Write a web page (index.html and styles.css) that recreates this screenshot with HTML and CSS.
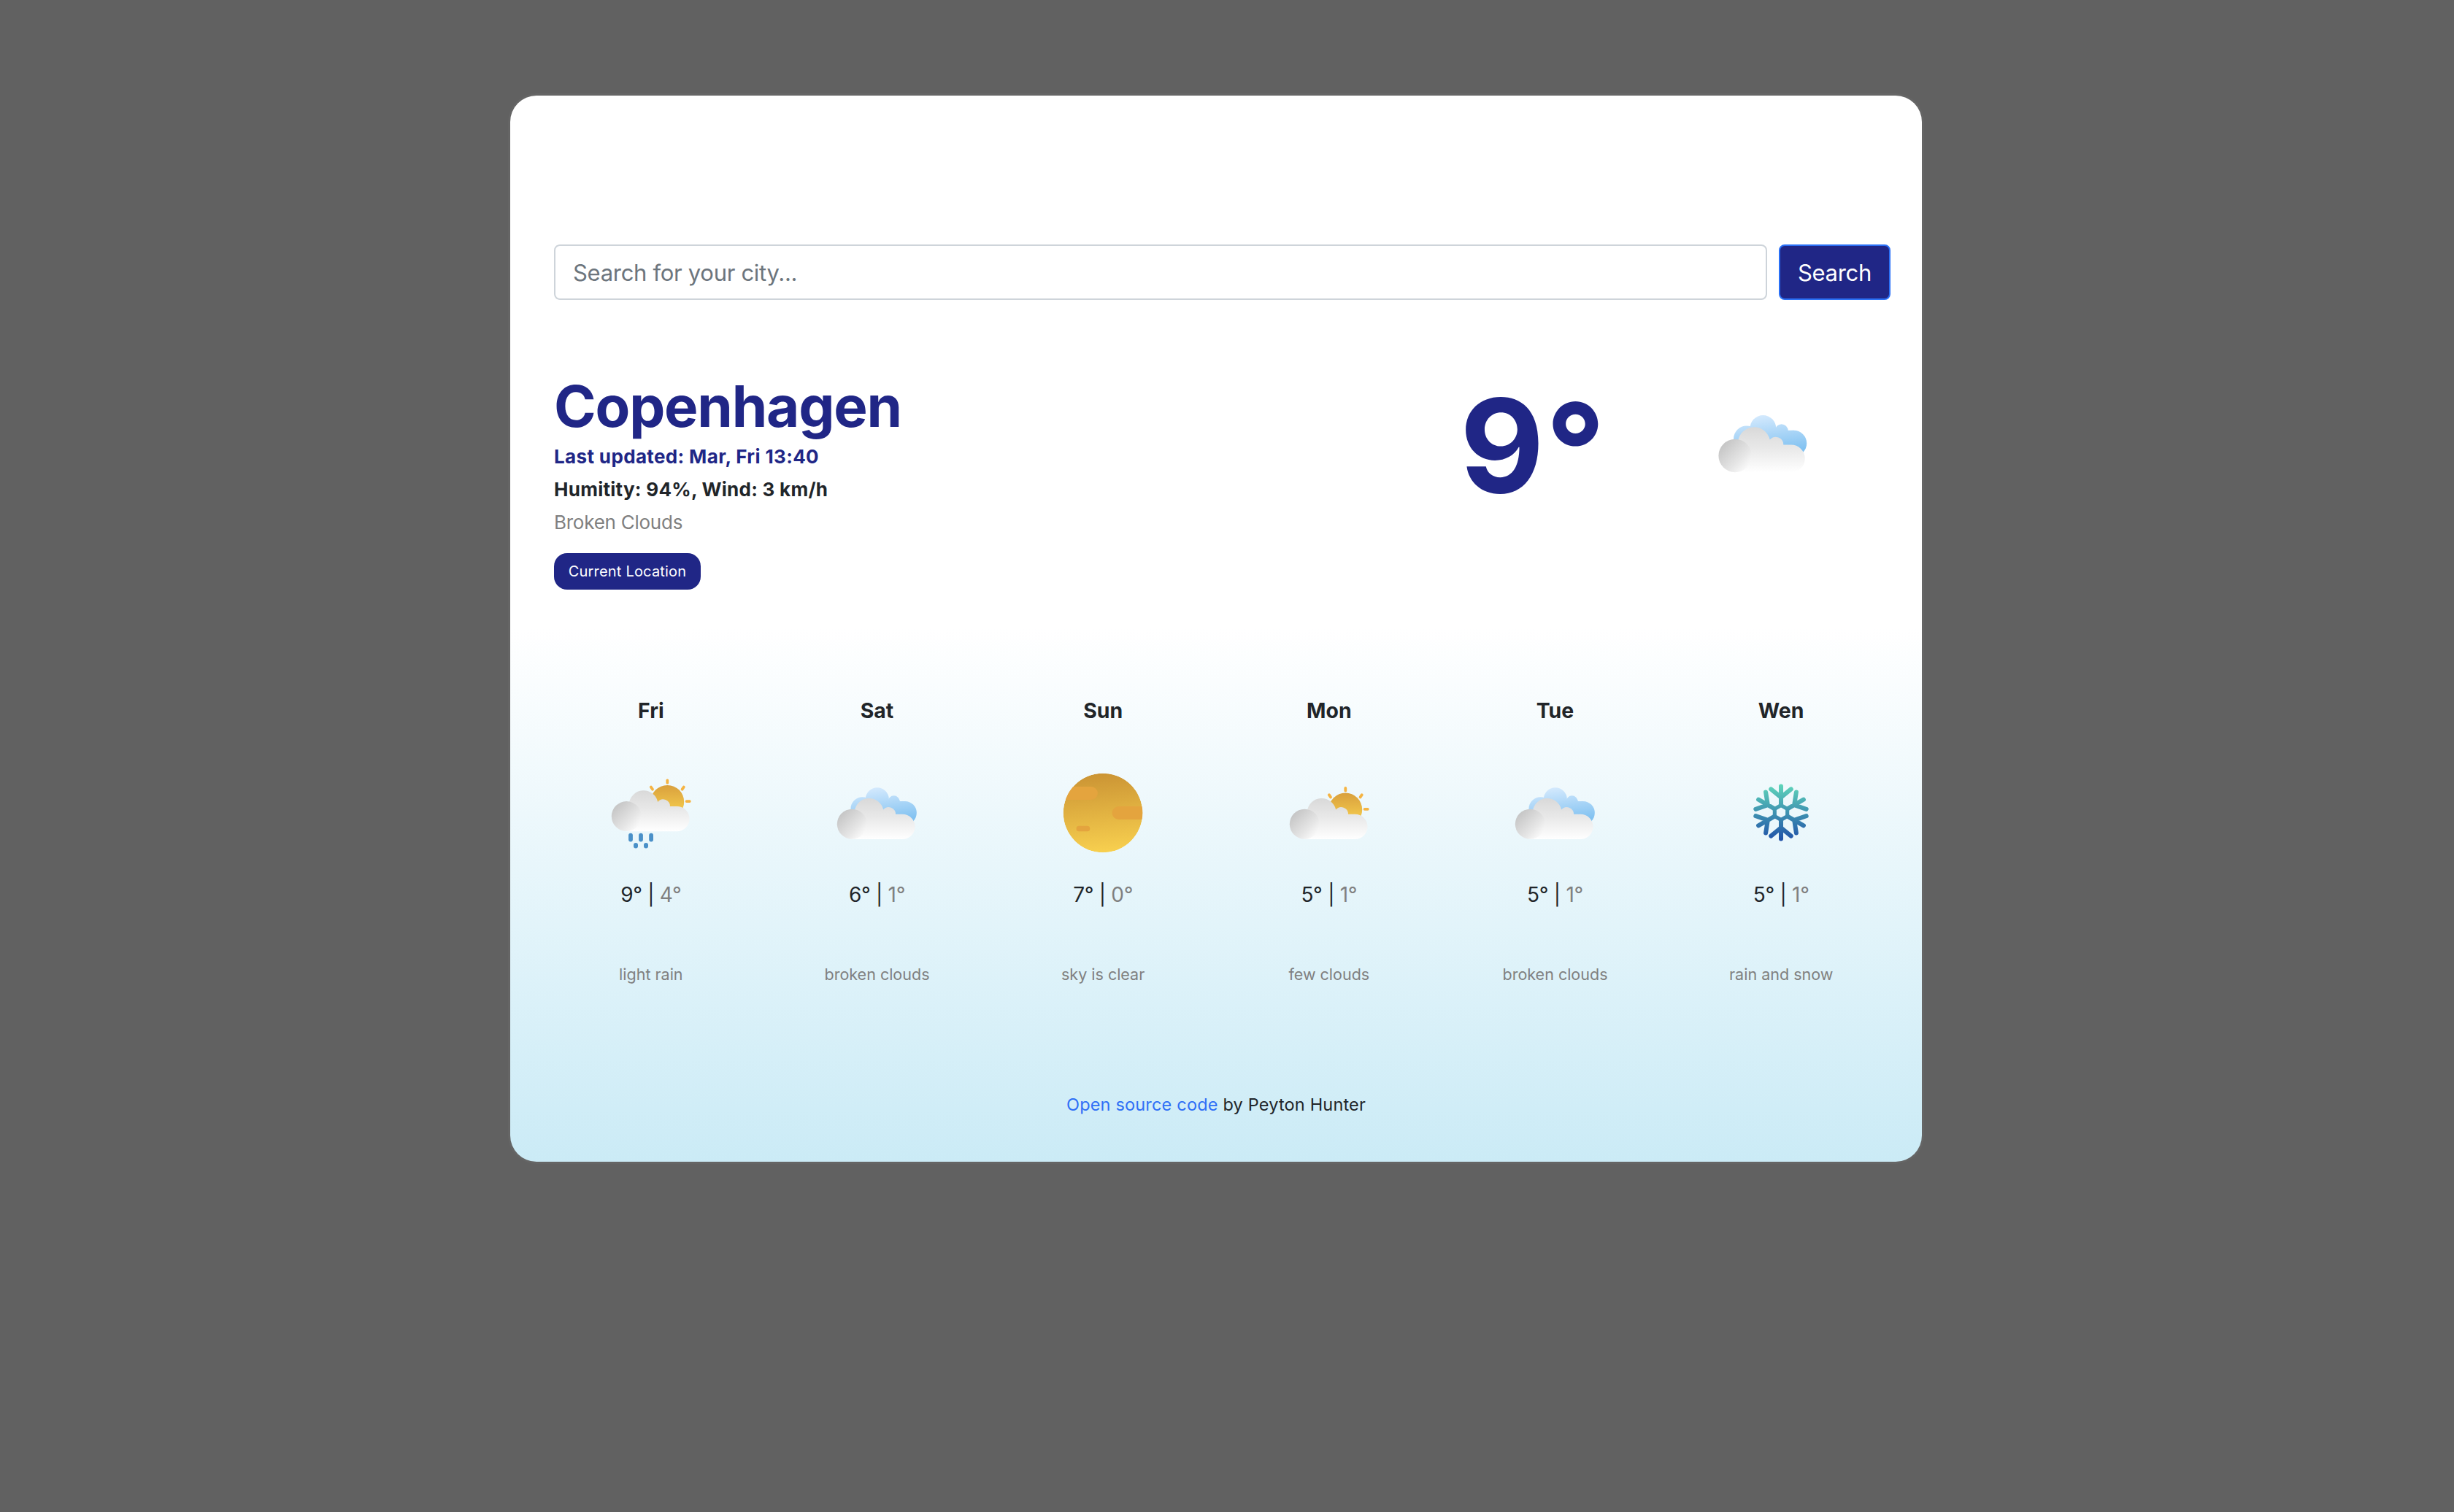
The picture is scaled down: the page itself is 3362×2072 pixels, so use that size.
FILE: index.html
```html
<!DOCTYPE html>
<html lang="en">
<head>
<meta charset="utf-8">
<title>Weather</title>
<link rel="stylesheet" href="styles.css">
</head>
<body>
<svg class="defs" width="0" height="0" aria-hidden="true">
  <defs>
    <linearGradient id="g-cloud" x1="0" y1="0" x2="0" y2="1"><stop offset="0" stop-color="#d9d9d9"/><stop offset=".45" stop-color="#e8e8e8"/><stop offset="1" stop-color="#fff"/></linearGradient>
    <linearGradient id="g-puff" x1=".12" y1=".12" x2=".85" y2=".85"><stop offset="0" stop-color="#c4c4c4"/><stop offset=".7" stop-color="#e6e6e6"/><stop offset="1" stop-color="#f8f8f8"/></linearGradient>
    <linearGradient id="g-blue" gradientUnits="userSpaceOnUse" x1="64" y1="25" x2="70" y2="72"><stop offset="0" stop-color="#d3e9fd"/><stop offset="1" stop-color="#82c2f1"/></linearGradient>
    <linearGradient id="g-sun" x1="0" y1="0" x2="0" y2="1"><stop offset="0" stop-color="#d9a03d"/><stop offset="1" stop-color="#fbd651"/></linearGradient>
    <linearGradient id="g-disc" x1=".45" y1="0" x2=".55" y2="1"><stop offset="0" stop-color="#cb9434"/><stop offset="1" stop-color="#f8d04f"/></linearGradient>
    <linearGradient id="g-snow" gradientUnits="userSpaceOnUse" x1="0" y1="-38" x2="0" y2="38"><stop offset="0" stop-color="#5fd6ba"/><stop offset="1" stop-color="#2050a8"/></linearGradient>
    <clipPath id="c-disc"><circle cx="60" cy="60" r="54.3"/></clipPath>
    <g id="cloud">
      <path fill="url(#g-cloud)" d="M26 96A20.5 20.5 0 0 1 29.8 58A20 20 0 0 1 69.2 55.6A9.5 9.5 0 0 1 86 61.7H95.4A17.1 17.1 0 0 1 95.4 96Z"/>
      <circle cx="26.3" cy="75.3" r="20.5" fill="url(#g-puff)"/>
    </g>
    <g id="sun">
      <circle cx="82.3" cy="55.5" r="22.9" fill="url(#g-sun)"/>
      <path class="rays" d="M82.3 26V29.4M59.8 35.2L62 38.4M104.8 35.2L102.6 38.4M108.6 54.8H112.8"/>
    </g>
    <symbol id="i-clouds" viewBox="0 0 120 120">
      <g fill="url(#g-blue)"><circle cx="40.5" cy="54.4" r="16.1"/><circle cx="60.8" cy="41.4" r="16.1"/><circle cx="83.6" cy="44.3" r="8"/><circle cx="98.7" cy="60" r="16.1"/><path d="M60 42H91.4V43.9H99V75H60Z"/></g>
      <use href="#cloud"/>
    </symbol>
    <symbol id="i-few" viewBox="0 0 120 120"><use href="#sun"/><use href="#cloud"/></symbol>
    <symbol id="i-rain" viewBox="0 0 120 120">
      <g transform="translate(0 -10.7)"><use href="#sun"/><use href="#cloud"/></g>
      <g fill="#4a90c8"><rect x="29.1" y="87.7" width="5.8" height="11.8" rx="2.9"/><rect x="43.1" y="87.7" width="5.8" height="11.8" rx="2.9"/><rect x="57.2" y="87.7" width="5.8" height="11.8" rx="2.9"/><rect x="36" y="101" width="6" height="7.6" rx="3"/><rect x="50" y="101" width="6" height="7.6" rx="3"/></g>
    </symbol>
    <symbol id="i-clear" viewBox="0 0 120 120">
      <g clip-path="url(#c-disc)"><circle cx="60" cy="60" r="54.3" fill="url(#g-disc)"/>
      <g fill="#e4a43e"><rect x="-5" y="24" width="57.9" height="18" rx="9"/><rect x="72.6" y="51" width="60" height="18" rx="9"/><rect x="23.6" y="77.7" width="18.6" height="7.6" rx="3.5"/></g></g>
    </symbol>
    <symbol id="i-snow" viewBox="0 0 120 120">
      <g transform="translate(60 59.5) scale(1.02)" fill="none" stroke="url(#g-snow)" stroke-linecap="round" stroke-linejoin="round">
        <path stroke-width="5" d="M0-9.8L8.5-4.9V4.9L0 9.8L-8.5 4.9V-4.9Z"/>
        <path stroke-width="5.9" d="M.01-10L0-35.3M-13.5-31.5L0-20.5L13.5-31.5M.01 10L0 35.3M-13.5 31.5L0 20.5L13.5 31.5M8.7-5L30.3-17.5M34-4.6L17.8-10.2L20.5-27.4M-8.7-5L-30.3-17.5M-34-4.6L-17.8-10.2L-20.5-27.4M8.7 5L30.3 17.5M34 4.6L17.8 10.2L20.5 27.4M-8.7 5L-30.3 17.5M-34 4.6L-17.8 10.2L-20.5 27.4"/>
      </g>
    </symbol>
  </defs>
</svg>
<main class="card">
  <form class="search">
    <input class="search-input" type="text" placeholder="Search for your city...">
    <button class="search-button" type="button">Search</button>
  </form>
  <section class="current">
    <div class="info">
      <h1 class="city">Copenhagen</h1>
      <p class="line updated">Last updated: Mar, Fri 13:40</p>
      <p class="line stats">Humitity: 94%, Wind: 3 km/h</p>
      <p class="line sky">Broken Clouds</p>
      <button class="locate" type="button">Current Location</button>
    </div>
    <div class="temp">9<span class="degree">°</span></div>
    <svg class="now-icon"><use href="#i-clouds"/></svg>
  </section>
  <section class="forecast">
    <div class="day"><h2 class="name">Fri</h2><svg class="icon"><use href="#i-rain"/></svg><p class="range">9° | <span class="low">4°</span></p><p class="desc">light rain</p></div>
    <div class="day"><h2 class="name">Sat</h2><svg class="icon"><use href="#i-clouds"/></svg><p class="range">6° | <span class="low">1°</span></p><p class="desc">broken clouds</p></div>
    <div class="day"><h2 class="name">Sun</h2><svg class="icon"><use href="#i-clear"/></svg><p class="range">7° | <span class="low">0°</span></p><p class="desc">sky is clear</p></div>
    <div class="day"><h2 class="name">Mon</h2><svg class="icon"><use href="#i-few"/></svg><p class="range">5° | <span class="low">1°</span></p><p class="desc">few clouds</p></div>
    <div class="day"><h2 class="name">Tue</h2><svg class="icon"><use href="#i-clouds"/></svg><p class="range">5° | <span class="low">1°</span></p><p class="desc">broken clouds</p></div>
    <div class="day"><h2 class="name">Wen</h2><svg class="icon"><use href="#i-snow"/></svg><p class="range">5° | <span class="low">1°</span></p><p class="desc">rain and snow</p></div>
  </section>
  <footer class="credit"><a class="link" href="#">Open source code</a> by Peyton Hunter</footer>
</main>
</body>
</html>
```
FILE: styles.css
```css
* { box-sizing: border-box; }
body {
  margin: 0;
  min-height: 2072px;
  padding-top: 131px;
  background: #616161;
  color: #212529;
  font-family: Inter, "Liberation Sans", sans-serif;
}
h1, h2, p { margin: 0; }
button { font-family: inherit; }
.defs { position: absolute; }
.card {
  width: 1934px;
  margin-left: 699px;
  padding: 204px 38px 60px;
  border-radius: 36px;
  background: linear-gradient(to bottom, #fff 50%, #cbebf6 100%);
  box-shadow: 0 0 0 3px #656565;
}
.search {
  display: flex;
  gap: 16px;
  height: 76px;
  padding: 0 5px 0 22px;
}
.search-input {
  flex: 1;
  min-width: 0;
  padding: 0 24px;
  border: 2px solid #ced4da;
  border-radius: 8px;
  background: #fff;
  font: 400 31px Inter, "Liberation Sans", sans-serif;
  letter-spacing: -0.3px;
}
.search-input::placeholder { color: #6c757d; opacity: 1; }
.search-button {
  width: 153px;
  padding: 0;
  border: 2px solid #2a70f6;
  border-radius: 8px;
  background: #202686;
  color: #fff;
  font-size: 31px;
  letter-spacing: -0.3px;
}
.current {
  display: flex;
  margin-top: 100px;
  padding-left: 22px;
}
.info { width: 1241px; }
.city {
  color: #202686;
  font-size: 78px;
  font-weight: 700;
  letter-spacing: -1.2px;
  line-height: 92px;
}
.line { font-size: 26px; line-height: 45px; }
.updated { color: #202686; font-weight: 700; letter-spacing: 0.36px; }
.stats { font-weight: 700; letter-spacing: 0.27px; }
.sky { color: #808080; letter-spacing: -0.25px; }
.locate {
  display: block;
  width: 201px;
  height: 50px;
  margin-top: 20px;
  padding: 0;
  border: 0;
  border-radius: 18px;
  background: #202686;
  color: #fff;
  font-size: 20px;
  letter-spacing: 0.2px;
}
.temp {
  width: 348px;
  margin-top: 12px;
  color: #202686;
  font-size: 178px;
  font-weight: 700;
  letter-spacing: 1.8px;
  line-height: 175px;
}
.degree { line-height: 0; vertical-align: -5px; }
.now-icon {
  width: 133px;
  height: 133px;
  margin-top: 30px;
}
.forecast {
  display: grid;
  grid-template-columns: repeat(6, 1fr);
  margin-top: 145px;
  text-align: center;
}
.day {
  display: flex;
  flex-direction: column;
  align-items: center;
}
.name { font-size: 28.4px; font-weight: 700; line-height: 42px; }
.icon { width: 120px; height: 120px; margin-top: 59px; }
.rays { fill: none; stroke: #f5b443; stroke-width: 3.8; stroke-linecap: round; }
.range { margin-top: 31px; font-size: 28px; letter-spacing: -0.3px; line-height: 42px; }
.low { color: #808080; }
.desc { margin-top: 72px; color: #808080; font-size: 21.5px; line-height: 32px; }
.credit {
  margin-top: 145px;
  font-size: 23.5px;
  letter-spacing: 0.18px;
  line-height: 36px;
  text-align: center;
}
.link { color: #2e6ff6; text-decoration: none; }
```
